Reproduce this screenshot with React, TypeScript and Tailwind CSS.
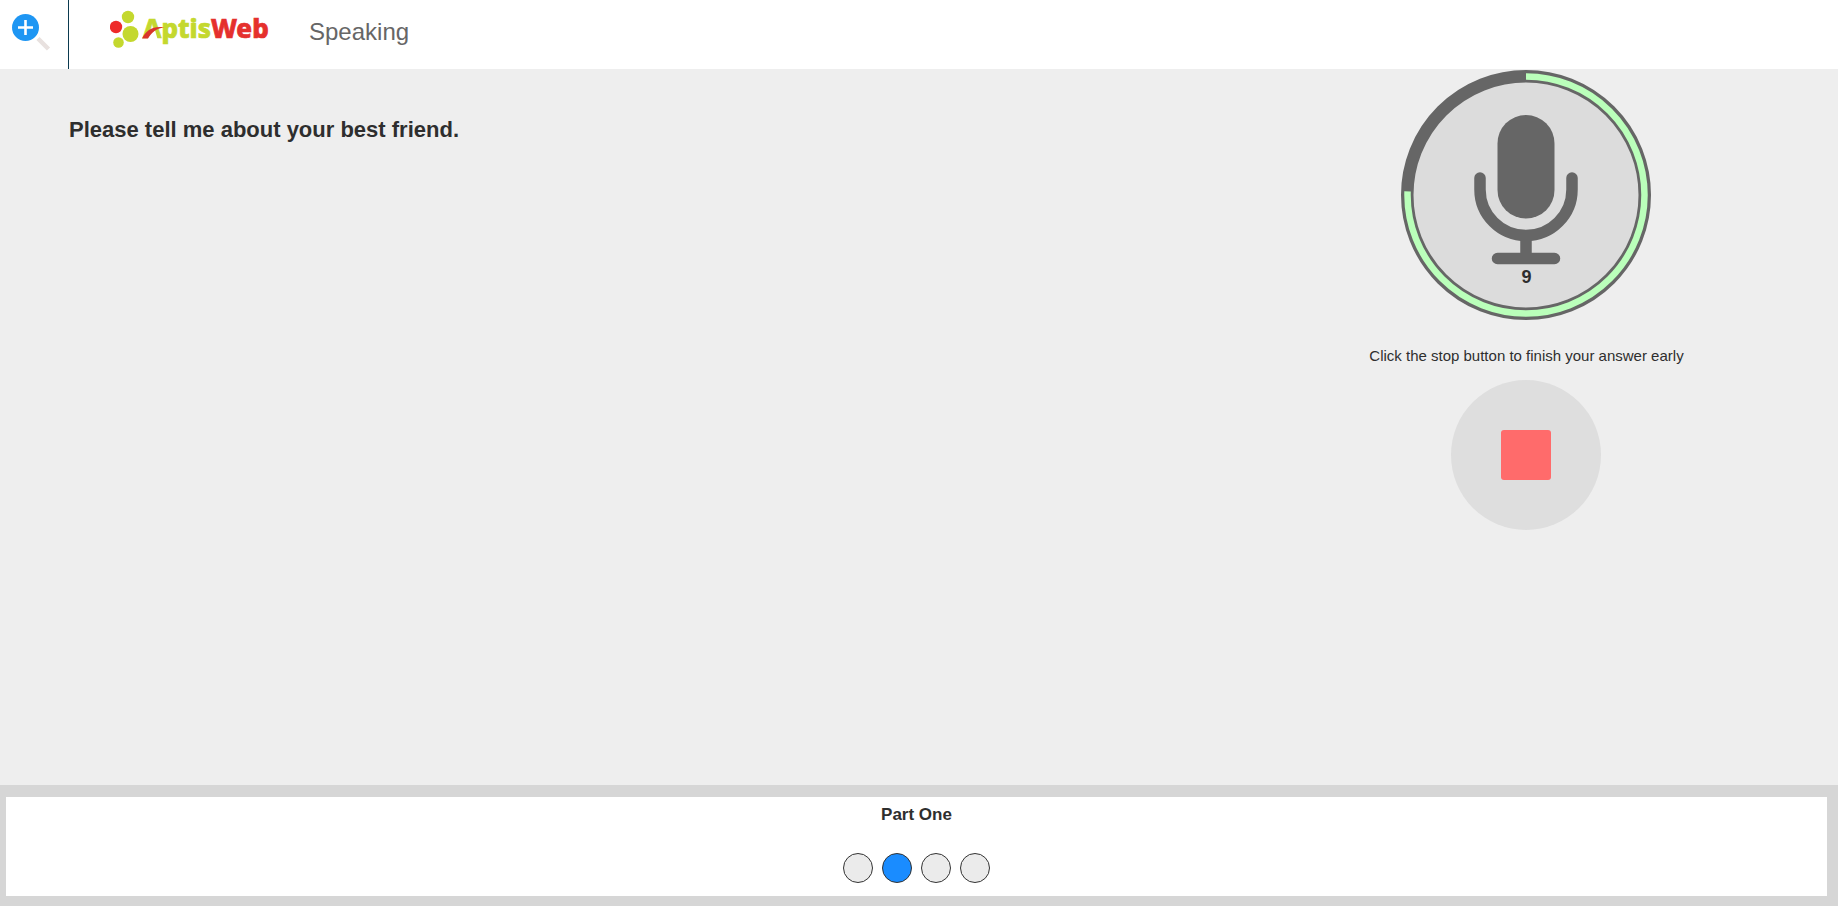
import { useState } from 'react';

const QUESTIONS = [1, 2, 3, 4];
const TOTAL_SECONDS = 36;
const REMAINING_SECONDS = 9;

function AptisLogo() {
  return (
    <svg width="160" height="44" viewBox="0 0 160 44" role="img" aria-label="AptisWeb">
      <circle cx="18" cy="11" r="6.2" fill="#c4d82e" />
      <circle cx="6" cy="21" r="6.2" fill="#ee2b2a" />
      <circle cx="20.500" cy="28" r="8" fill="#c4d82e" />
      <circle cx="8.500" cy="36.500" r="5.3" fill="#c4d82e" />
      <text
        x="33"
        y="32"
        fontSize="26"
        fontWeight="800"
        fontFamily="'Noto Sans', 'Open Sans', sans-serif"
        fill="#c4d82e"
        stroke="#c4d82e"
        strokeWidth="0.7"
      >
        Aptis<tspan fill="#e5302d" stroke="#e5302d">Web</tspan>
      </text>
      {/* the swoosh stands in for the crossbar of the A */}
      <path d="M37.500 33L41 27.500L45 24L47.500 33Z" fill="#fff" />
      <path d="M32 32.500C36 24 44 19.500 54 21.500C46 22.500 42 26 38 32.500Z" fill="#d9342b" />
    </svg>
  );
}

function ZoomIcon() {
  return (
    <svg width="40" height="40" viewBox="0 0 40 40" aria-hidden="true">
      <path d="M26 24.500L36.500 35" stroke="#e8e1df" strokeWidth="4.5" />
      <circle cx="13.500" cy="13.500" r="13.5" fill="#1e96f3" />
      <path d="M13.500 6V21M6 13.500H21" stroke="#fff" strokeWidth="2.6" />
    </svg>
  );
}

function RecordTimer({ remaining, total }: { remaining: number; total: number }) {
  const percent = ((total - remaining) / total) * 100 + 0.5;

  return (
    <div className="relative w-[250px] h-[250px]" role="timer">
      <svg width="250" height="250" viewBox="0 0 250 250" aria-hidden="true">
        <circle cx="125" cy="125" r="118.75" fill="#dcdcdc" stroke="#666" strokeWidth="12.5" />
        <circle
          cx="125"
          cy="125"
          r="118.5"
          fill="none"
          stroke="#baffba"
          strokeWidth="6.5"
          pathLength="100"
          strokeDasharray={`${percent} 100`}
          transform="rotate(-90 125 125)"
        />
        <rect x="96.500" y="45" width="57" height="103.5" rx="28.5" fill="#666" />
        <path
          d="M79 108V119.500A46 46 0 0 0 171 119.500V108M125 165.500V188M96.500 188.500H153.500"
          fill="none"
          stroke="#666"
          strokeWidth="11.5"
          strokeLinecap="round"
        />
      </svg>
      <span className="absolute inset-x-0 top-[195px] text-center text-lg leading-6 font-bold">{remaining}</span>
    </div>
  );
}

export default function App() {
  const [current, setCurrent] = useState(2);
  const [stopped, setStopped] = useState(false);

  return (
    <div className="min-h-screen flex flex-col bg-[#eee] text-[#2e2e2e] font-['Liberation_Sans',Arial,sans-serif]">
      <header className="flex h-[69px] bg-white">
        <button type="button" aria-label="Zoom in" className="w-[69px] pl-3 pt-3.5 flex items-start border-r border-[#0b3a4f]">
          <ZoomIcon />
        </button>
        <div className="flex items-start pl-[41px] pt-1.5">
          <AptisLogo />
          <h1 className="ml-[39px] mt-2.5 text-2xl leading-8 text-[#666]">Speaking</h1>
        </div>
      </header>

      <main className="flex-1 flex pl-[69px] pr-5">
        <section className="w-2/3 pt-[49px]">
          <h2 className="text-[22px] leading-6 font-bold">Please tell me about your best friend.</h2>
        </section>
        <section className="w-1/3 flex flex-col items-center pt-px">
          <RecordTimer remaining={REMAINING_SECONDS} total={TOTAL_SECONDS} />
          <p className="mt-6 text-[15px] leading-6">Click the stop button to finish your answer early</p>
          <button
            type="button"
            aria-label="Stop recording"
            disabled={stopped}
            onClick={() => setStopped(true)}
            className="mt-3 w-[150px] h-[150px] rounded-full bg-[#dedede] flex items-center justify-center"
          >
            <span className="w-[50px] h-[50px] rounded-[3px] bg-[#ff6b6b]" />
          </button>
        </section>
      </main>

      <footer className="bg-[#d6d6d6] pt-3 pb-2.5 pl-1.5 pr-[11px]">
        <nav aria-label="Questions" className="bg-white flex flex-col items-center pt-1.5 pb-[13px]">
          <h3 className="text-[17px] leading-6 font-bold">Part One</h3>
          <div className="mt-[26px] flex gap-[9px]">
            {QUESTIONS.map((n) => (
              <button
                key={n}
                type="button"
                aria-label={`Question ${n}`}
                aria-current={n === current}
                onClick={() => setCurrent(n)}
                className={`w-[30px] h-[30px] rounded-full border border-[#333] ${n === current ? 'bg-[#1a8cff]' : 'bg-[#ebebeb]'}`}
              />
            ))}
          </div>
        </nav>
      </footer>
    </div>
  );
}
